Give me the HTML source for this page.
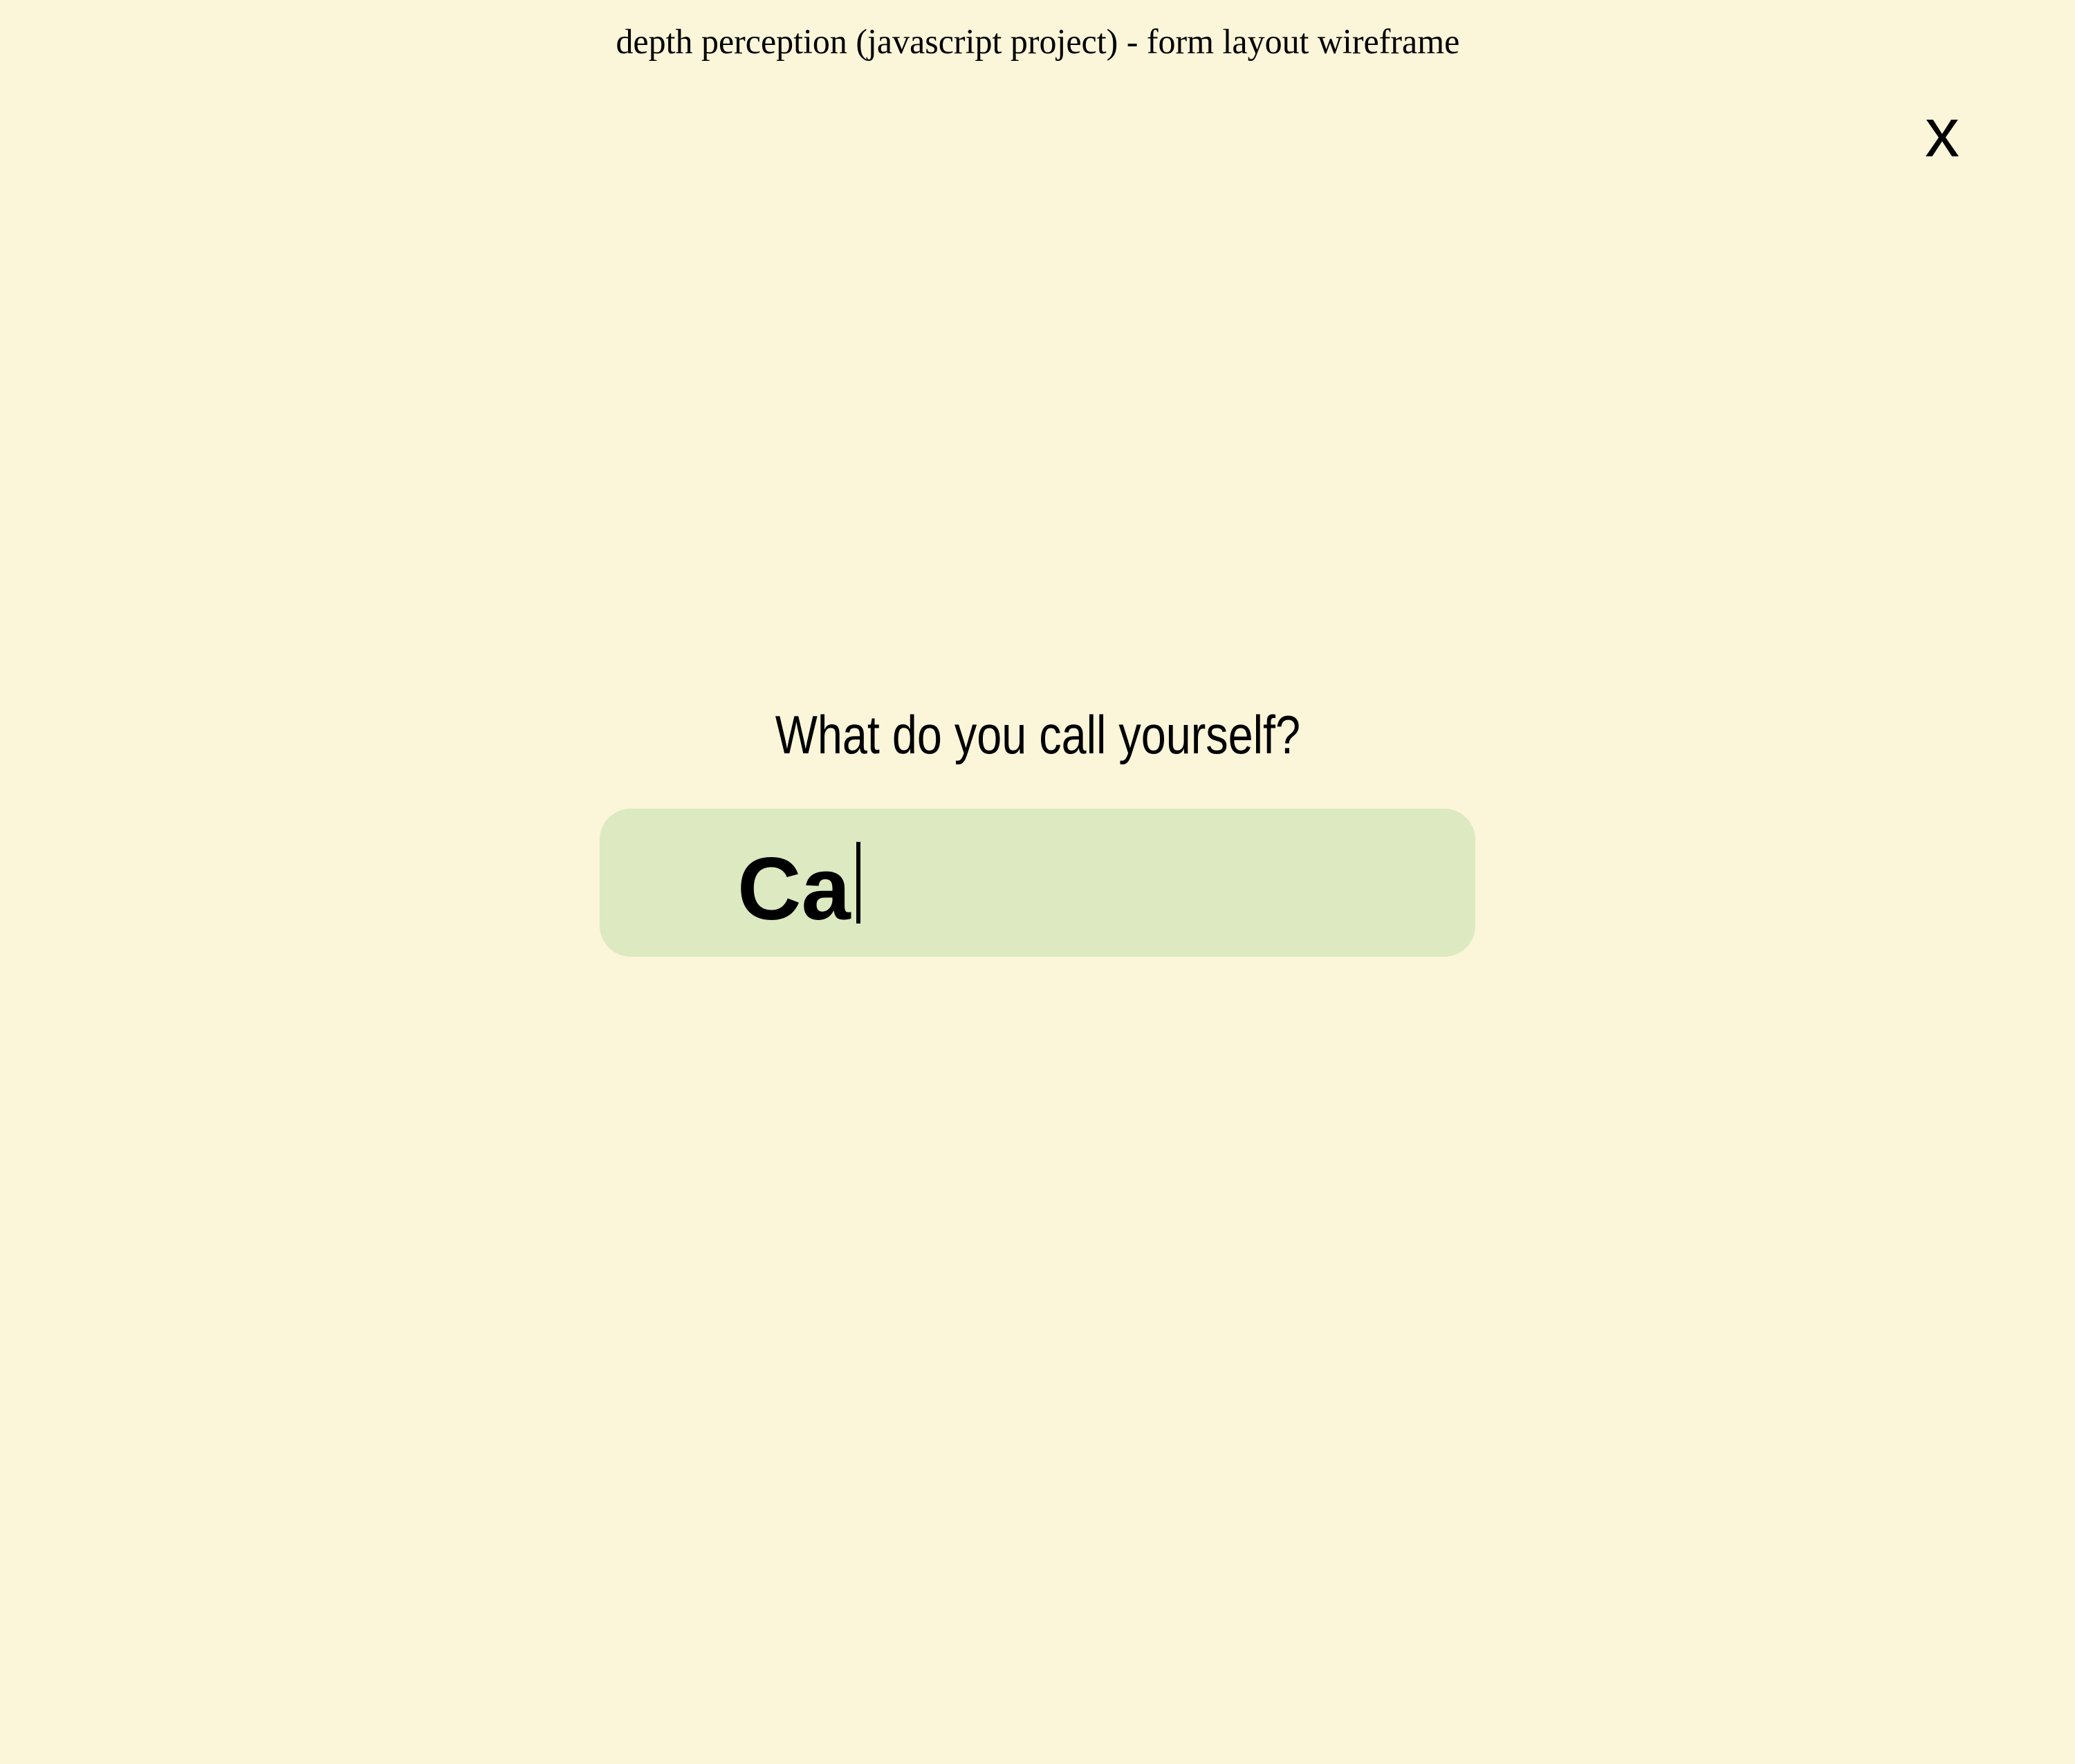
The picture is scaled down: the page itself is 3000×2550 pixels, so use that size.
<!DOCTYPE html>
<html><head><meta charset="utf-8"><style>
html,body{margin:0;padding:0;}
body{width:3000px;height:2550px;background:#fbf5d9;position:relative;overflow:hidden;}
.t{position:absolute;left:0;width:3000px;top:32px;text-align:center;font-family:"Liberation Serif",serif;font-size:51px;color:#000;}
.t span{display:inline-block;transform:scaleX(0.98);}
.x{position:absolute;left:2783px;top:132px;font-family:"Liberation Sans",sans-serif;font-size:100px;line-height:120px;color:#000;}
.q{position:absolute;left:0;width:3000px;top:1017px;text-align:center;font-family:"Liberation Sans",sans-serif;font-size:78px;line-height:90px;color:#000;}
.q span{display:inline-block;transform:scaleX(0.83);}
.box{position:absolute;left:867px;top:1169px;width:1266px;height:214px;background:#dce9c1;border-radius:45px;}
.ca{position:absolute;left:1066px;top:1206px;font-family:"Liberation Sans",sans-serif;font-weight:bold;font-size:128px;line-height:160px;color:#000;}
.cur{position:absolute;left:1238px;top:1217px;width:6px;height:118px;background:#000;}
</style></head><body>
<div class="t"><span>depth perception (javascript project) - form layout wireframe</span></div>
<div class="x">x</div>
<div class="q"><span>What do you call yourself?</span></div>
<div class="box"></div>
<div class="ca">Ca</div>
<div class="cur"></div>
</body></html>
